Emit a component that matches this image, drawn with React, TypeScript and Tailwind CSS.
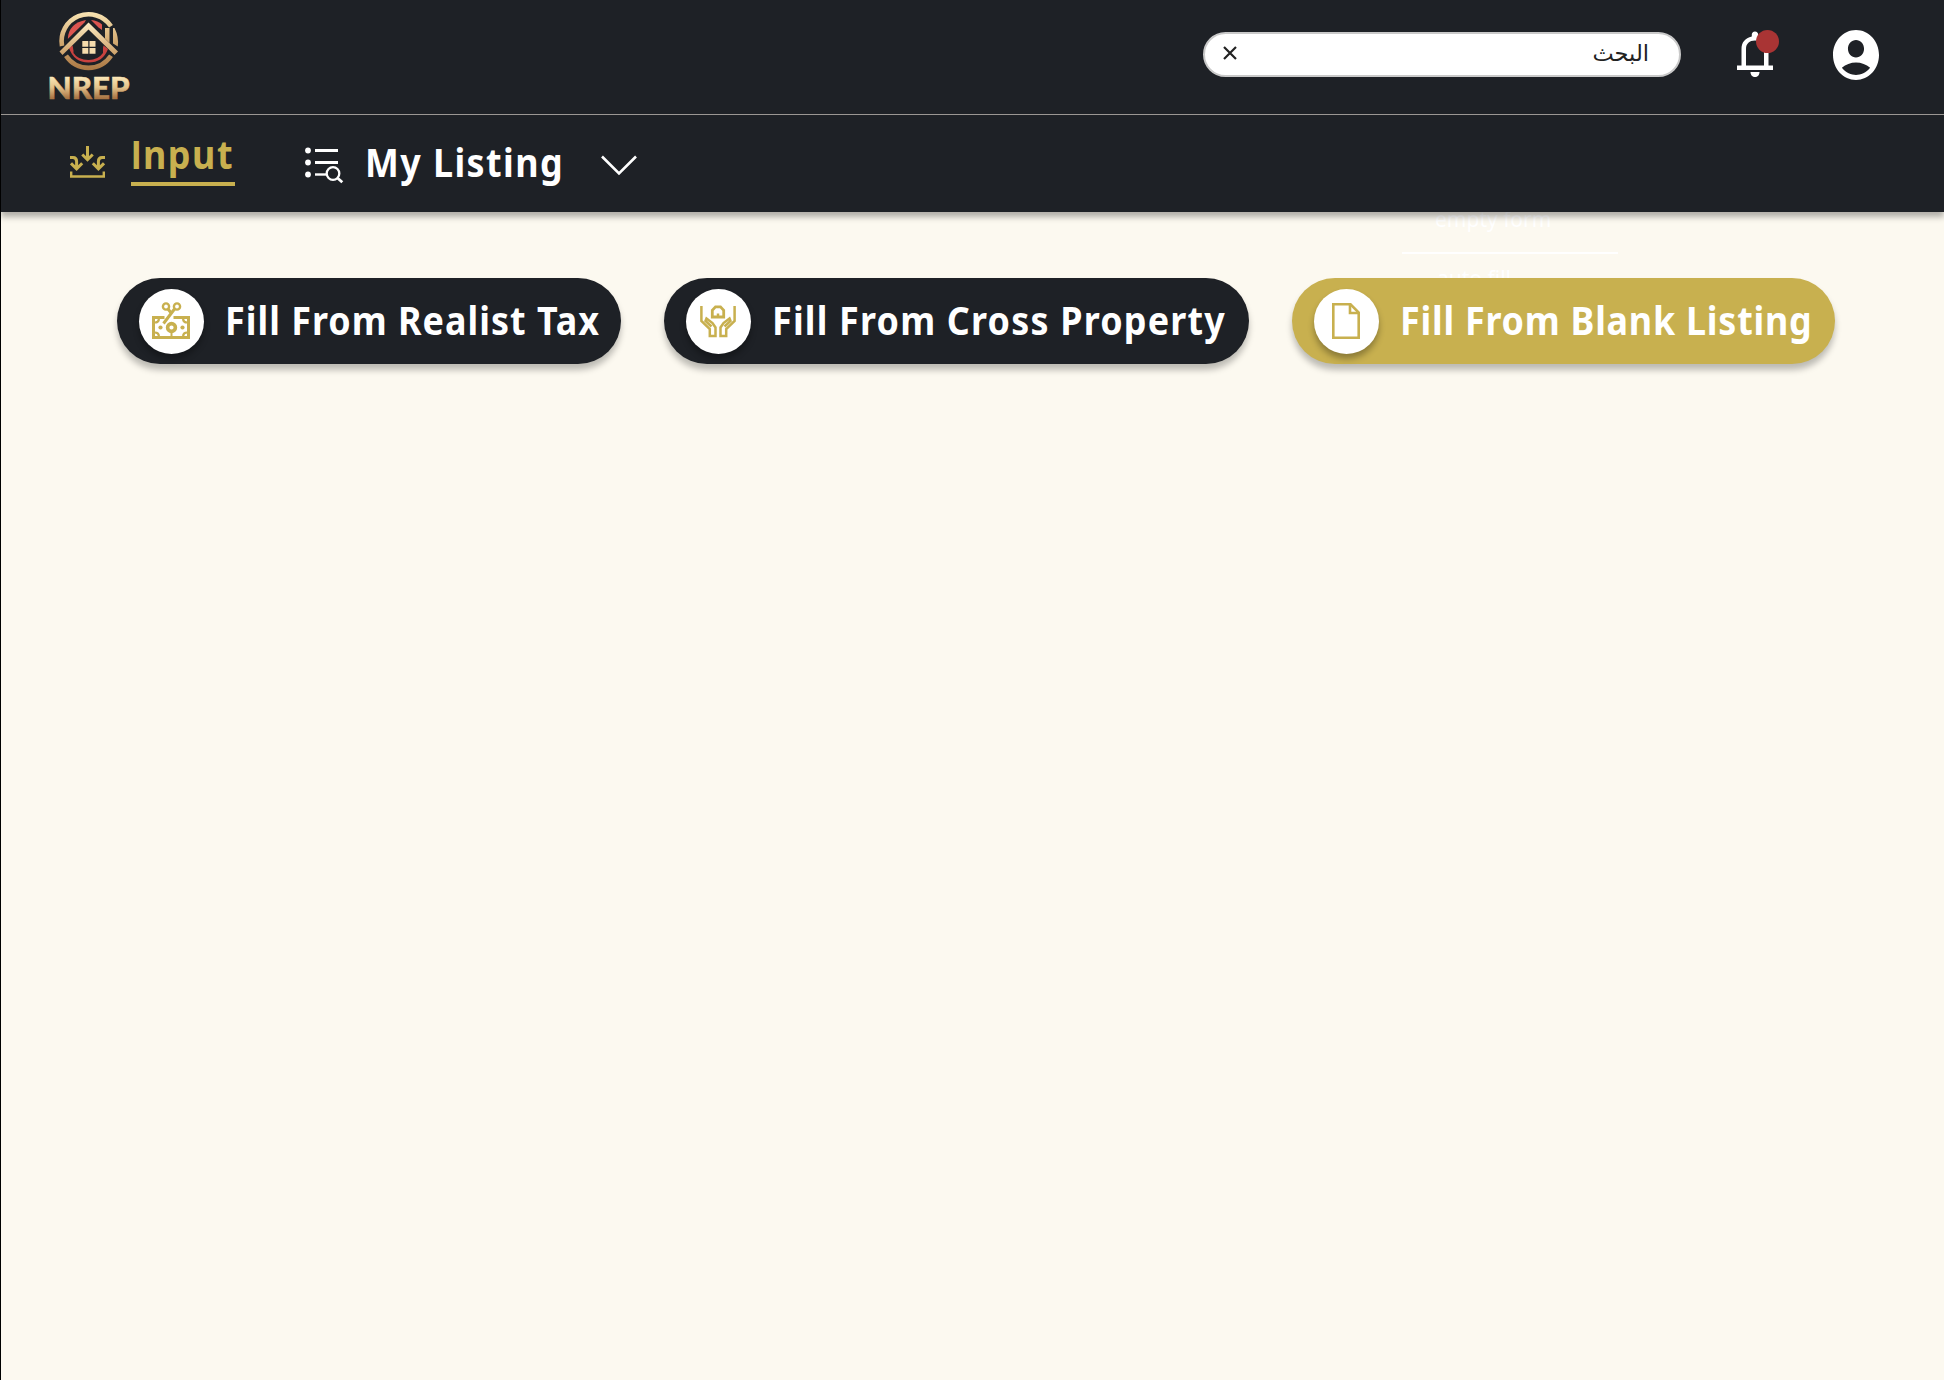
import type { ReactNode } from "react";

const label = "block origin-left scale-x-[0.92] font-['Noto_Sans',sans-serif] font-bold text-[39px] leading-[40px] whitespace-nowrap";

function Logo() {
  return (
    <svg width="82" height="96" viewBox="0 0 82 96" className="block overflow-visible">
      <defs>
        <linearGradient id="gold" x1="0" y1="0.2" x2="0" y2="0.8">
          <stop offset="0" stopColor="#fbe7b6" />
          <stop offset="0.5" stopColor="#e3c28a" />
          <stop offset="1" stopColor="#a97545" />
        </linearGradient>
        <linearGradient id="ring" gradientUnits="userSpaceOnUse" x1="0" y1="2" x2="0" y2="61">
          <stop offset="0" stopColor="#fbe7b6" />
          <stop offset="0.5" stopColor="#d3ab73" />
          <stop offset="1" stopColor="#ab7844" />
        </linearGradient>
        <linearGradient id="roof" gradientUnits="userSpaceOnUse" x1="0" y1="12" x2="0" y2="46">
          <stop offset="0" stopColor="#fff0c8" />
          <stop offset="1" stopColor="#cda068" />
        </linearGradient>
      </defs>
      {/* broken outer ring */}
      <path d="M14 37A27 27 0 0 1 63 17.200" fill="none" stroke="url(#ring)" strokeWidth="4.600" />
      <path d="M18 46.800A27 27 0 0 0 63 46.800" fill="none" stroke="url(#ring)" strokeWidth="4.600" />
      {/* red disc fragments */}
      <path d="M19.800 29.500Q21 14 38 11L36.500 13.500L20 29.700Z" fill="#dc5550" />
      <path d="M43 11Q50 11.500 54 15.500V21L50.500 18.500L43.500 11.500Z" fill="#dc5550" />
      <path d="M21 39L24.500 36.500Q25.500 44 31 47.500Q40.500 52 50 47.500Q54.500 44 55.500 36.500L60 40Q55 53.500 40.500 53.500Q26 53.500 21 39Z" fill="#c9423f" />
      <path d="M25.500 36L29 32.500V45H52V32.500L55 36V44Q50 51 40.500 51Q30 51 25.500 44Z" fill="#1e2126" />
      <path d="M11.500 42.500L40.500 13.500L70 42.500L66.500 46L40.500 20.500L14.500 46Z" fill="url(#roof)" />
      <path d="M57 19H61.500V34L57 29.500Z M65 19H66.500Q71 28 69.800 37.500L65 34.500Z" fill="url(#ring)" />
      <path d="M34.300 32h6v5.700h-6zM41.500 32h6v5.700h-6zM34.300 39h6v5.700h-6zM41.500 39h6v5.700h-6z" fill="#f5dcad" />
      <text x="-0.500" y="90" textLength="82" lengthAdjust="spacingAndGlyphs" fontFamily="Lato" fontWeight="900" fontSize="29.500" fill="url(#gold)" stroke="url(#gold)" strokeWidth="0.500">NREP</text>
    </svg>
  );
}

function InputIcon() {
  return (
    <svg width="35" height="32" viewBox="0 0 35 32" fill="none" stroke="#c8b04f" strokeWidth="3" className="block">
      <path d="M17.500 0V14M12.300 8.500L17.500 13.700L22.700 8.500" />
      <path d="M0 11.500H3Q6.600 11.500 6.600 15.500V23M1 17.300L6.600 22.900L12.200 17.300" />
      <path d="M35 11.500H32Q28.400 11.500 28.400 15.500V23M22.800 17.300L28.400 22.900L34 17.300" />
      <path d="M1.200 25.500V30.500H33.800V25.500" strokeWidth="2.400" />
    </svg>
  );
}

function ListSearchIcon() {
  return (
    <svg width="39" height="37" viewBox="0 0 39 37" fill="none" stroke="#fff" strokeWidth="3" className="block">
      <path d="M10 3.500H33M10 15.500H33" />
      <path d="M10 27.500H21" strokeWidth="2.400" />
      <g fill="#fff" stroke="none">
        <circle cx="3" cy="3.500" r="2.900" />
        <circle cx="3" cy="15.500" r="2.900" />
        <circle cx="3" cy="27.500" r="2.900" />
      </g>
      <circle cx="28" cy="26.500" r="6.300" strokeWidth="2.300" />
      <path d="M32.800 31.300L37.300 35.300" strokeWidth="2.800" />
    </svg>
  );
}

function BellIcon() {
  return (
    <svg width="36" height="46" viewBox="0 0 36 46" className="block">
      <path d="M18 0.500C20 0.500 21.200 2 21.200 3.500V5.500C28 7 31.500 11.500 31.500 18V34.500H36V39H0V34.500H4.500V18C4.500 11.500 8 7 14.800 5.500V3.500C14.800 2 16 0.500 18 0.500ZM9 34.500H27V18C27 12.500 23.500 9.500 18 9.500C12.500 9.500 9 12.500 9 18Z" fill="#fff" fillRule="evenodd" />
      <path d="M13.500 41H22.500C22.500 44 20.500 46 18 46C15.500 46 13.500 44 13.500 41Z" fill="#fff" />
    </svg>
  );
}

function AvatarIcon() {
  return (
    <svg width="46" height="50" viewBox="2 2 20 20" preserveAspectRatio="none" className="block">
      <path fill="#fff" d="M12 2C6.480 2 2 6.480 2 12s4.480 10 10 10 10-4.480 10-10S17.520 2 12 2zm0 4c1.930 0 3.500 1.570 3.500 3.500S13.930 13 12 13s-3.500-1.570-3.500-3.500S10.070 6 12 6zm0 14c-2.030 0-4.430-.82-6.140-2.880C7.550 15.800 9.680 15 12 15s4.450.8 6.140 2.120C16.430 19.180 14.030 20 12 20z" />
    </svg>
  );
}

function TaxIcon() {
  return (
    <svg width="38" height="38" viewBox="0 0 38 38" fill="none" stroke="#c8b04f" className="block">
      <path d="M12.500 15.500H1.500V35.500H36.500V15.500H21.500" strokeWidth="3" />
      <path d="M3 20.500Q6.500 20.500 7 17M35 20.500Q31.500 20.500 31 17M3 30.500Q6.500 30.500 7 34M35 30.500Q31.500 30.500 31 34" strokeWidth="2.200" />
      <circle cx="14" cy="4.500" r="3.100" strokeWidth="2.400" />
      <circle cx="25" cy="4.500" r="3.100" strokeWidth="2.400" />
      <path d="M22.500 7L11.500 21.500M16 7L20 12" strokeWidth="3" />
      <circle cx="19.500" cy="25.500" r="3.900" strokeWidth="3.600" />
      <circle cx="8.500" cy="25.500" r="2.100" fill="#c8b04f" stroke="none" />
      <circle cx="30.500" cy="25.500" r="2.100" fill="#c8b04f" stroke="none" />
      <path d="M19.500 31V34" strokeWidth="2" />
    </svg>
  );
}

function HandsIcon() {
  return (
    <svg width="36" height="33" viewBox="0 0 36 33" fill="none" stroke="#c8b04f" strokeWidth="2.500" className="block">
      <path d="M1.400 1V16L9.800 24V31H15.500V22.500L12.500 18L6.500 13.500L5.500 16L11.500 21.500" />
      <path d="M34.600 1V16L26.200 24V31H20.500V22.500L23.500 18L29.500 13.500L30.500 16L24.500 21.500" />
      <path d="M12.300 12V5.200L15.500 1.800H20.500L23.700 5.200V12Z" strokeWidth="2.800" />
      <path d="M18 8.500V11" />
    </svg>
  );
}

function BlankIcon() {
  return (
    <svg width="28" height="36" viewBox="0 0 28 36" fill="none" stroke="#c8b04f" strokeWidth="2.600" className="block">
      <path d="M1.300 1.300H18.500L26.700 9.500V34.700H1.300Z" />
      <path d="M18 1.300V10H26.700" />
    </svg>
  );
}

function Pill({ icon, text, className, tracking }: { icon: ReactNode; text: string; className: string; tracking: string }) {
  return (
    <button className={"flex h-[86px] items-center rounded-full pl-[22px] text-white shadow-[0_6px_6px_rgba(0,0,0,0.25)] " + className}>
      <span className="mr-[21px] flex size-[65px] shrink-0 items-center justify-center rounded-full bg-white pr-px shadow-[0_5px_6px_rgba(0,0,0,0.3)]">
        {icon}
      </span>
      <span className={"-mt-[2px] " + label + " " + tracking}>{text}</span>
    </button>
  );
}

export default function App() {
  return (
    <div className="h-[1380px] w-[1944px] overflow-hidden border-l border-black bg-[#fcf9f0]">
      <div className="relative z-10 shadow-[0_5px_6px_rgba(0,0,0,0.3)]">
        <header className="flex h-[115px] items-start border-b border-[#9b9793] bg-[#1e2126]">
          <div className="ml-[47px] mt-[9px]">
            <Logo />
          </div>
          <div dir="rtl" className="ml-auto mt-[32px] flex h-[45px] w-[478px] items-center justify-between rounded-full border-2 border-[#c9c9c9] bg-white pl-[18px] pr-[30px] text-[#222]">
            <span className="-mt-[4px] font-['DejaVu_Sans',sans-serif] text-[22.5px] leading-[24px]">البحث</span>
            <svg className="-mt-[3px]" width="14" height="14" viewBox="0 0 14 14" stroke="#222" strokeWidth="2.200"><path d="M1 1L13 13M13 1L1 13" /></svg>
          </div>
          <div className="relative ml-[56px] mt-[31px]">
            <BellIcon />
            <span className="absolute left-[19px] top-[-1px] size-[23px] rounded-full bg-[#a93434]" />
          </div>
          <div className="ml-[60px] mr-[65px] mt-[30px]">
            <AvatarIcon />
          </div>
        </header>
        <nav className="flex h-[97px] items-start bg-[#1e2126] text-white">
          <div className="ml-[69px] mt-[31px]"><InputIcon /></div>
          <div className="ml-[26px] mt-[19px] h-[52px] w-[104px] border-b-4 border-[#c8b04f] text-[#c8b04f]">
            <span className={label + " tracking-[1.65px]"}><span className="font-['Roboto',sans-serif]">I</span>nput</span>
          </div>
          <div className="ml-[70px] mt-[32px]"><ListSearchIcon /></div>
          <span className={label + " ml-[21px] mt-[27px] w-[198px] tracking-[1.55px]"}>My Listing</span>
          <svg className="ml-[38px] mt-[40px]" width="36" height="21" viewBox="0 0 36 21" fill="none" stroke="#fff" strokeWidth="2.600"><path d="M1 1.500L18 18.500L35 1.500" /></svg>
        </nav>
      </div>
      <main className="relative pl-[116px] pt-[66px]">
        <div className="absolute left-[1401px] top-0 w-[216px] font-['Noto_Sans',sans-serif] text-[21px] leading-[28px] text-white">
          <div className="h-[42px] border-b-2 border-white pl-[33px]">
            <span className="relative -top-[7px] block">empty form</span>
          </div>
          <div className="pl-[35px] pt-[10px]">auto fill</div>
        </div>
        <div className="relative flex gap-[43px]">
          <Pill icon={<TaxIcon />} text="Fill From Realist Tax" tracking="tracking-[1.1px]" className="w-[504px] bg-[#1e2126]" />
          <Pill icon={<HandsIcon />} text="Fill From Cross Property" tracking="tracking-[1.3px]" className="w-[585px] bg-[#1e2126]" />
          <Pill icon={<BlankIcon />} text="Fill From Blank Listing" tracking="tracking-[0.83px]" className="w-[543px] bg-[#c8b04f]" />
        </div>
      </main>
    </div>
  );
}
